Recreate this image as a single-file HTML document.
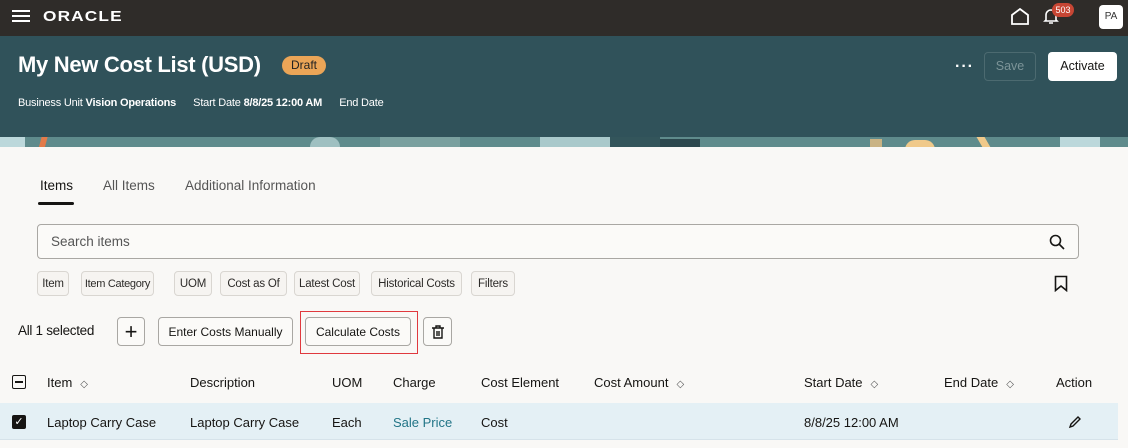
<!DOCTYPE html>
<html><head><meta charset="utf-8"><style>
*{box-sizing:border-box;margin:0;padding:0}
body{width:1128px;height:448px;overflow:hidden;background:#f9f8f6;font-family:"Liberation Sans",sans-serif;color:#161513;position:relative}
.a{position:absolute;white-space:nowrap}
.top{left:0;top:0;width:1128px;height:36px;background:#2f2c29}
.hero{left:0;top:36px;width:1128px;height:102px;background:#30525a}
.strip{left:0;top:137px;width:1128px;height:10px;background:#5f8b8c;overflow:hidden}
.btn{position:absolute;border:1px solid #a9a7a3;border-radius:4px;background:#fbfaf8;font-size:12px;display:flex;align-items:center;justify-content:center;color:#161513;white-space:nowrap}
.chip{position:absolute;top:271px;height:25px;border:1px solid #d9d6d1;border-radius:4px;background:#f6f4f1;font-size:11.5px;display:flex;align-items:center;justify-content:center;color:#2d2b29;white-space:nowrap;letter-spacing:-0.2px}
.th{position:absolute;top:375px;font-size:13px;color:#161513;white-space:nowrap}
.td{position:absolute;top:415px;font-size:13px;color:#161513;white-space:nowrap}
.sort{font-size:10px;margin-left:8px;color:#555}
</style></head><body>
<div class="a top"></div>
<div class="a" style="left:12px;top:10px;width:18px;height:2px;background:#fff;box-shadow:0 5px 0 #fff,0 10px 0 #fff"></div>
<div class="a" style="left:43px;top:8px;color:#fff;font-size:15px;letter-spacing:1px;font-weight:bold;transform:scaleX(1.15);transform-origin:left">ORACLE</div>
<svg class="a" style="left:1010px;top:7px" width="20" height="18" viewBox="0 0 20 18"><path d="M2 8 L10 2 L18 8 V17 H2 Z" fill="none" stroke="#fff" stroke-width="1.8"/></svg>
<svg class="a" style="left:1043px;top:7px" width="16" height="18" viewBox="0 0 16 18"><path d="M3 13 V8 a5 5 0 0 1 10 0 V13 L14 14 H2 Z M6 16 H10" fill="none" stroke="#fff" stroke-width="1.6"/></svg>
<div class="a" style="left:1052px;top:3px;width:22px;height:14px;border-radius:7px;background:#c74634;color:#fff;font-size:9px;text-align:center;line-height:14px">503</div>
<div class="a" style="left:1099px;top:5px;width:24px;height:24px;border-radius:4px;background:#fff;font-size:10px;text-align:center;line-height:24px;color:#333">PA</div>
<div class="a hero"></div>
<div class="a strip">
<div class="a" style="left:40px;top:0;width:6px;height:12px;background:#e27b4a;transform:skewX(-15deg)"></div>
<div class="a" style="left:0;top:0;width:25px;height:10px;background:#bcd8db"></div>
<div class="a" style="left:310px;top:0;width:30px;height:10px;background:#9fc0c1;border-radius:10px 10px 0 0"></div>
<div class="a" style="left:380px;top:0;width:80px;height:10px;background:#7aa09f"></div>
<div class="a" style="left:540px;top:0;width:80px;height:10px;background:#a9c9cb"></div>
<div class="a" style="left:610px;top:0;width:50px;height:10px;background:#33555b"></div>
<div class="a" style="left:660px;top:2px;width:40px;height:10px;background:#2c484e"></div>
<div class="a" style="left:870px;top:2px;width:12px;height:10px;background:#c9b384"></div>
<div class="a" style="left:905px;top:3px;width:30px;height:10px;background:#f0c98a;border-radius:10px 10px 0 0"></div>
<div class="a" style="left:980px;top:0;width:8px;height:12px;background:#f0c98a;transform:skewX(30deg)"></div>
<div class="a" style="left:1060px;top:0;width:40px;height:10px;background:#bcd8db"></div>
</div>
<div class="a" style="left:18px;top:52px;color:#fff;font-size:22px;font-weight:bold;letter-spacing:-0.3px">My New Cost List (USD)</div>
<div class="a" style="left:282px;top:56px;width:44px;height:19px;border-radius:10px;background:#eba557;font-size:12px;text-align:center;line-height:19px;color:#222">Draft</div>
<div class="a" style="left:18px;top:97px;color:#fff;font-size:11px;letter-spacing:-0.2px">Business Unit <b>Vision Operations</b>&nbsp;&nbsp;&nbsp;&nbsp;&nbsp;&nbsp;Start Date <b>8/8/25 12:00 AM</b>&nbsp;&nbsp;&nbsp;&nbsp;&nbsp;&nbsp;End Date</div>
<div class="a" style="left:955px;top:58px;color:#fff;font-size:16px;font-weight:bold;letter-spacing:1px">···</div>
<div class="a" style="left:984px;top:52px;width:52px;height:29px;border:1px solid #4c6a70;border-radius:4px;color:#7c9498;font-size:12.5px;text-align:center;line-height:27px">Save</div>
<div class="a" style="left:1048px;top:52px;width:69px;height:29px;border-radius:4px;background:#fff;color:#161513;font-size:12.5px;text-align:center;line-height:29px">Activate</div>
<div class="a" style="left:40px;top:178px;font-size:13.5px">Items</div>
<div class="a" style="left:38px;top:202px;width:36px;height:3px;background:#161513;border-radius:2px"></div>
<div class="a" style="left:103px;top:178px;font-size:13.5px;color:#555">All Items</div>
<div class="a" style="left:185px;top:178px;font-size:13.5px;color:#555">Additional Information</div>
<div class="a" style="left:37px;top:224px;width:1042px;height:35px;border:1px solid #a9a7a3;border-radius:4px;background:#fbfaf8"></div>
<div class="a" style="left:51px;top:234px;font-size:13.5px;color:#555">Search items</div>
<svg class="a" style="left:1049px;top:234px" width="16" height="16" viewBox="0 0 16 16"><circle cx="6.5" cy="6.5" r="5" fill="none" stroke="#161513" stroke-width="1.6"/><path d="M10 10 L15 15" stroke="#161513" stroke-width="1.6"/></svg>
<div class="chip" style="left:37px;width:32px">Item</div>
<div class="chip" style="left:81px;width:73px;font-size:11px;letter-spacing:-0.3px">Item Category</div>
<div class="chip" style="left:174px;width:38px">UOM</div>
<div class="chip" style="left:220px;width:67px">Cost as Of</div>
<div class="chip" style="left:294px;width:66px">Latest Cost</div>
<div class="chip" style="left:371px;width:91px">Historical Costs</div>
<div class="chip" style="left:471px;width:44px">Filters</div>
<svg class="a" style="left:1054px;top:275px" width="14" height="17" viewBox="0 0 14 17"><path d="M1.5 1.5 H12.5 V15.5 L7 11 L1.5 15.5 Z" fill="none" stroke="#161513" stroke-width="1.6"/></svg>
<div class="a" style="left:18px;top:323px;font-size:13.5px;letter-spacing:-0.3px">All 1 selected</div>
<div class="btn" style="left:117px;top:317px;width:28px;height:29px;font-size:22px;font-weight:300">+</div>
<div class="btn" style="left:158px;top:317px;width:135px;height:29px">Enter Costs Manually</div>
<div class="a" style="left:300px;top:311px;width:118px;height:43px;border:1.5px solid #e0393e"></div>
<div class="btn" style="left:305px;top:317px;width:106px;height:29px">Calculate Costs</div>
<div class="btn" style="left:423px;top:317px;width:29px;height:29px"><svg width="12" height="14" viewBox="0 0 12 14"><path d="M0 3 H12 M4 3 V1 H8 V3 M2 3 V13 H10 V3 M5 6 V11 M7 6 V11" fill="none" stroke="#161513" stroke-width="1.4"/></svg></div>
<div class="a" style="left:12px;top:375px;width:14px;height:14px;border:1.5px solid #161513;border-radius:2px"></div>
<div class="a" style="left:15px;top:381px;width:8px;height:1.6px;background:#161513"></div>
<div class="th" style="left:47px">Item<span class="sort">◇</span></div>
<div class="th" style="left:190px">Description</div>
<div class="th" style="left:332px">UOM</div>
<div class="th" style="left:393px">Charge</div>
<div class="th" style="left:481px">Cost Element</div>
<div class="th" style="left:594px">Cost Amount<span class="sort">◇</span></div>
<div class="th" style="left:804px">Start Date<span class="sort">◇</span></div>
<div class="th" style="left:944px">End Date<span class="sort">◇</span></div>
<div class="th" style="left:1056px">Action</div>
<div class="a" style="left:0;top:403px;width:1118px;height:37px;background:#e4f0f5;border-bottom:1px solid #d6e3ea"></div>
<div class="a" style="left:12px;top:415px;width:14px;height:14px;background:#161513;border-radius:2px;color:#fff;font-size:11px;text-align:center;line-height:14px">✓</div>
<div class="td" style="left:47px">Laptop Carry Case</div>
<div class="td" style="left:190px">Laptop Carry Case</div>
<div class="td" style="left:332px">Each</div>
<div class="td" style="left:393px;color:#227587">Sale Price</div>
<div class="td" style="left:481px">Cost</div>
<div class="td" style="left:804px">8/8/25 12:00 AM</div>
<svg class="a" style="left:1068px;top:415px" width="14" height="14" viewBox="0 0 14 14"><path d="M2 12 L3 9 L10 2 L12 4 L5 11 Z" fill="none" stroke="#161513" stroke-width="1.4"/></svg>
</body></html>
